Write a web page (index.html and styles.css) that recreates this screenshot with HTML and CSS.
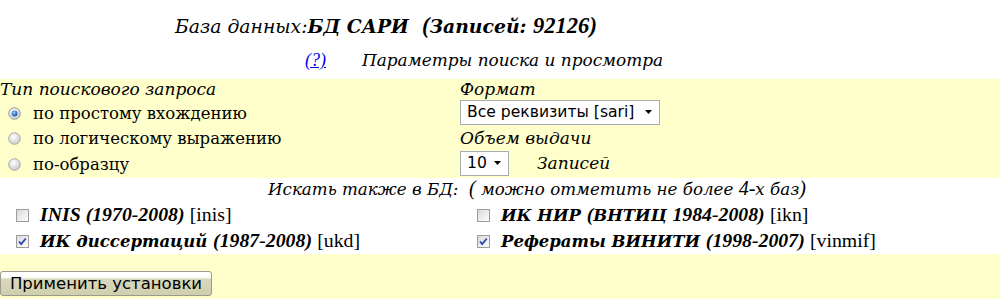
FILE: index.html
```html
<!DOCTYPE html>
<html lang="ru">
<head>
<meta charset="utf-8">
<title>Параметры поиска</title>
<link rel="stylesheet" href="styles.css">
</head>
<body>
<div class="title">База данных:<b>БД САРИ&nbsp;&nbsp;<span class="lat">(</span>Записей: <span class="lat">92126)</span></b></div>
<div class="subtitle"><a href="#" class="help">(?)</a><span class="subtext">Параметры поиска и просмотра</span></div>

<div class="panel">
  <div class="label">Тип поискового запроса</div>
  <div class="label">Формат</div>

  <div class="opt"><svg class="radio" viewBox="0 0 13 13"><defs><radialGradient id="rg" cx="40%" cy="35%" r="70%"><stop offset="0" stop-color="#ffffff"/><stop offset="1" stop-color="#c8c8c8"/></radialGradient><radialGradient id="rb" cx="40%" cy="35%" r="70%"><stop offset="0" stop-color="#8fd0ff"/><stop offset="1" stop-color="#0a4aa8"/></radialGradient></defs><circle cx="6.5" cy="6.5" r="5.8" fill="url(#rg)" stroke="#9a9a9a" stroke-width="1"/><circle cx="6.5" cy="6.5" r="3" fill="url(#rb)"/></svg><span>по простому вхождению</span></div>
  <div class="cell"><div class="select wide"><span>Все реквизиты [sari]</span><svg class="arrow" viewBox="0 0 7 4"><path d="M0 0H7L3.5 4Z" fill="#000"/></svg></div></div>

  <div class="opt"><svg class="radio" viewBox="0 0 13 13"><circle cx="6.5" cy="6.5" r="5.8" fill="url(#rg)" stroke="#a8a8a8" stroke-width="1"/></svg><span>по логическому выражению</span></div>
  <div class="label">Объем выдачи</div>

  <div class="opt"><svg class="radio" viewBox="0 0 13 13"><circle cx="6.5" cy="6.5" r="5.8" fill="url(#rg)" stroke="#a8a8a8" stroke-width="1"/></svg><span>по-образцу</span></div>
  <div class="cell"><div class="select small"><span>10</span><svg class="arrow" viewBox="0 0 7 4"><path d="M0 0H7L3.5 4Z" fill="#000"/></svg></div><span class="label recs">Записей</span></div>
</div>

<div class="dbs">
  <div class="dbhead">Искать также в БД:&nbsp; <span class="lat">(</span> можно отметить не более <span class="lat">4-</span>х баз<span class="lat">)</span></div>
  <div class="dbgrid">
    <div class="db"><svg class="cb" viewBox="0 0 13 13"><defs><linearGradient id="cg" x1="0" y1="0" x2="1" y2="1"><stop offset="0" stop-color="#d8d8d8"/><stop offset="1" stop-color="#ffffff"/></linearGradient></defs><rect x="0.5" y="0.5" width="12" height="12" fill="url(#cg)" stroke="#9c9c9c"/></svg><span><b><i class="lat">INIS (1970-2008)</i></b> <span class="lat">[inis]</span></span></div>
    <div class="db right"><svg class="cb" viewBox="0 0 13 13"><rect x="0.5" y="0.5" width="12" height="12" fill="url(#cg)" stroke="#9c9c9c"/></svg><span><b><i>ИК НИР <span class="lat">(</span>ВНТИЦ <span class="lat">1984-2008)</span></i></b> <span class="lat">[ikn]</span></span></div>
    <div class="db"><svg class="cb" viewBox="0 0 13 13"><rect x="0.5" y="0.5" width="12" height="12" fill="url(#cg)" stroke="#9c9c9c"/><path d="M3 6.5L5.2 9L9.8 3.5" fill="none" stroke="#2a46b8" stroke-width="1.8"/></svg><span><b><i>ИК диссертаций <span class="lat">(1987-2008)</span></i></b> <span class="lat">[ukd]</span></span></div>
    <div class="db right"><svg class="cb" viewBox="0 0 13 13"><rect x="0.5" y="0.5" width="12" height="12" fill="url(#cg)" stroke="#9c9c9c"/><path d="M3 6.5L5.2 9L9.8 3.5" fill="none" stroke="#2a46b8" stroke-width="1.8"/></svg><span><b><i>Рефераты ВИНИТИ <span class="lat">(1998-2007)</span></i></b> <span class="lat">[vinmif]</span></span></div>
  </div>
</div>

<div class="footer">
  <button class="apply" type="button">Применить установки</button>
</div>
</body>
</html>
```
FILE: styles.css
```css
html, body {
  margin: 0;
  padding: 0;
  background: #ffffff;
  color: #000;
  font-family: "DejaVu Serif", serif;
}

.lat {
  font-family: "Liberation Serif", "Times New Roman", serif;
  font-size: 1.2em;
}

.title {
  height: 46px;
  box-sizing: border-box;
  padding: 14px 0 0 175px;
  font-size: 18.8px;
  font-style: italic;
  line-height: 24px;
  white-space: nowrap;
}

.subtitle {
  height: 33px;
  box-sizing: border-box;
  padding: 3px 0 0 305px;
  font-size: 16.9px;
  font-style: italic;
  line-height: 22px;
  white-space: nowrap;
}

.help {
  color: #0000ee;
  text-decoration: underline;
  font-family: "Liberation Serif", "Times New Roman", serif;
  font-size: 18px;
}

.subtext {
  margin-left: 36px;
}

.panel {
  background: #ffffcc;
  display: grid;
  grid-template-columns: 460px 1fr;
  grid-template-rows: 20px 26px 25px 26px;
  padding-bottom: 2px;
}

.label {
  font-style: italic;
  font-size: 17px;
  line-height: 20px;
  display: flex;
  align-items: center;
  white-space: nowrap;
}

.opt {
  display: flex;
  align-items: center;
  font-size: 16.5px;
  white-space: nowrap;
  padding-top: 2px;
}

.radio {
  width: 13px;
  height: 13px;
  margin: 0 12px 0 8px;
  flex: none;
}

.cell {
  display: flex;
  align-items: center;
}

.select {
  height: 25px;
  box-sizing: border-box;
  border: 1px solid #a5acb2;
  background: #fff;
  display: flex;
  align-items: center;
  font-family: "DejaVu Sans", Verdana, sans-serif;
  font-size: 15.6px;
  padding-left: 6px;
}

.select.wide {
  width: 200px;
}

.select.small {
  width: 49px;
}

.select span {
  flex: 1;
  white-space: nowrap;
}

.arrow {
  width: 7px;
  height: 4px;
  margin-right: 7px;
}

.recs {
  margin-left: 28px;
}

.dbhead {
  font-style: italic;
  font-size: 16.7px;
  line-height: 20px;
  padding-left: 268px;
  white-space: nowrap;
}

.dbgrid {
  display: grid;
  grid-template-columns: 461px 1fr;
  grid-auto-rows: 26px;
  padding: 3px 0 0;
}

.db {
  display: flex;
  align-items: center;
  font-size: 16.5px;
  line-height: 22px;
  white-space: nowrap;
  padding-left: 16px;
}

.cb {
  width: 13px;
  height: 13px;
  margin-right: 11px;
  flex: none;
}

.footer {
  background: #ffffcc;
  padding-top: 17px;
  height: 45px;
  box-sizing: border-box;
}

.apply {
  display: block;
  width: 212px;
  height: 25px;
  margin: 0;
  padding: 0;
  border: 1px solid #9a9a90;
  border-radius: 3px;
  background: linear-gradient(to bottom, #ffffff 0%, #fbfbf4 25%, #d9d8bd 30%, #cfcfae 100%);
  font-family: "DejaVu Sans", Verdana, sans-serif;
  font-size: 16.5px;
  color: #000;
}
```
